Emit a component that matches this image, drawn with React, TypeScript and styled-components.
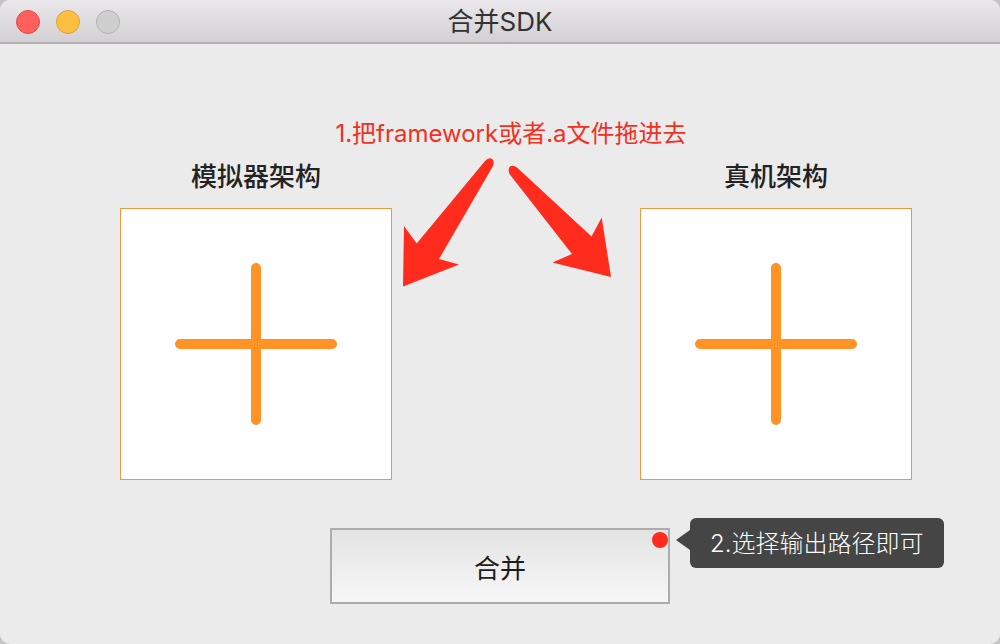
import React from "react";
import styled, { createGlobalStyle } from "styled-components";

const GlobalStyle = createGlobalStyle`
  * { box-sizing: border-box; }
  body {
    margin: 0;
    background: #c4c4c4;
    font-family: Inter, "Noto Sans CJK SC", sans-serif;
    color: #222222;
  }
`;

const Window = styled.div`
  display: flex;
  flex-direction: column;
  min-height: 100vh;
  overflow: hidden;
  border-radius: 10px;
  background: #ebebeb;
`;

const TitleBar = styled.header`
  display: grid;
  grid-template-columns: 1fr auto 1fr;
  align-items: center;
  height: 44px;
  padding: 2px 16px 0;
  border-bottom: 2px solid #b3b1b3;
  background: linear-gradient(#eae8ea, #d2d0d2);
`;

const Title = styled.h1`
  margin: 0;
  font-size: 26px;
  line-height: 40px;
  font-weight: 400;
  color: #333233;
`;

const WindowControls = styled.div`
  display: flex;
  gap: 16px;
`;

const ControlButton = styled.button<{ $fill: string; $edge: string }>`
  width: 24px;
  height: 24px;
  padding: 0;
  border: 1px solid ${(p) => p.$edge};
  border-radius: 50%;
  background: ${(p) => p.$fill};
`;

const Content = styled.main`
  display: flex;
  flex: 1;
  flex-direction: column;
  padding: 72px 0 40px;
`;

const Hint = styled.p`
  margin: 0;
  padding-left: 22px;
  text-align: center;
  font-size: 24px;
  line-height: 36px;
  color: #f2301f;
`;

const DropRow = styled.section`
  display: flex;
  justify-content: space-between;
  padding: 4px 88px 0 120px;
`;

const DropColumn = styled.div`
  display: flex;
  flex-direction: column;
  align-items: center;
  gap: 10px;
`;

const DropTitle = styled.h2`
  margin: 0;
  font-size: 26px;
  line-height: 42px;
  font-weight: 500;
`;

const DropZone = styled.button`
  display: flex;
  align-items: center;
  justify-content: center;
  width: 272px;
  height: 272px;
  padding: 0;
  border: 1px solid #ea9a3e;
  background: #ffffff;
`;

const Footer = styled.footer`
  display: flex;
  justify-content: center;
  padding-top: 48px;
`;

const MergeArea = styled.div`
  position: relative;
`;

const MergeButton = styled.button`
  display: block;
  width: 340px;
  height: 76px;
  padding: 6px 0 0;
  border: 2px solid #acacac;
  background: linear-gradient(#e3e3e3, #f7f7f7);
  font-family: inherit;
  font-size: 26px;
  line-height: 40px;
  color: #1c1c1c;
`;

const Dot = styled.span`
  position: absolute;
  top: 4px;
  right: 2px;
  width: 16px;
  height: 16px;
  border-radius: 50%;
  background: #ff2b1c;
`;

const Tooltip = styled.div`
  position: absolute;
  top: -10px;
  left: 100%;
  margin-left: 20px;
  padding: 8px 20px 6px;
  border-radius: 6px;
  background: #454545;
  font-size: 24px;
  line-height: 36px;
  font-weight: 300;
  white-space: nowrap;
  color: #ffffff;

  &::before {
    content: "";
    position: absolute;
    top: 12px;
    right: 100%;
    border: solid transparent;
    border-width: 10px 14px 10px 0;
    border-right-color: #454545;
  }
`;

function PlusIcon() {
  return (
    <svg width="162" height="162" viewBox="0 0 162 162" aria-hidden="true">
      <path d="M81 5v152M5 81h152" stroke="#ff9326" strokeWidth="10" strokeLinecap="round" />
    </svg>
  );
}

function Arrows() {
  return (
    <svg width="248" height="132" viewBox="0 0 248 132" fill="#ff2b1c" aria-hidden="true">
      <path d="M11 130.500L12 70L24.700 87.500L93 5Q96 1.500 99.500 2.500Q103 4.500 101 10L47 103L67 108.500Z" />
      <path d="M219 121L209.700 61.500L199.500 80.500L125 11.500Q121 8.500 118 10.500Q115.500 13 117.500 18L180 98L160.500 106.500Z" />
    </svg>
  );
}

function DropTarget({ label }: { label: string }) {
  return (
    <DropColumn>
      <DropTitle>{label}</DropTitle>
      <DropZone type="button" aria-label={label}>
        <PlusIcon />
      </DropZone>
    </DropColumn>
  );
}

export default function App() {
  return (
    <>
      <GlobalStyle />
      <Window>
        <TitleBar>
          <WindowControls>
            <ControlButton type="button" aria-label="关闭" $fill="#ff605c" $edge="#e24b48" />
            <ControlButton type="button" aria-label="最小化" $fill="#fdbf41" $edge="#dba03a" />
            <ControlButton type="button" aria-label="缩放" $fill="#cfcfcf" $edge="#b2b2b2" disabled />
          </WindowControls>
          <Title>合并SDK</Title>
        </TitleBar>
        <Content>
          <Hint>1.把framework或者.a文件拖进去</Hint>
          <DropRow>
            <DropTarget label="模拟器架构" />
            <Arrows />
            <DropTarget label="真机架构" />
          </DropRow>
          <Footer>
            <MergeArea>
              <MergeButton type="button">合并</MergeButton>
              <Dot />
              <Tooltip role="tooltip">2.选择输出路径即可</Tooltip>
            </MergeArea>
          </Footer>
        </Content>
      </Window>
    </>
  );
}
